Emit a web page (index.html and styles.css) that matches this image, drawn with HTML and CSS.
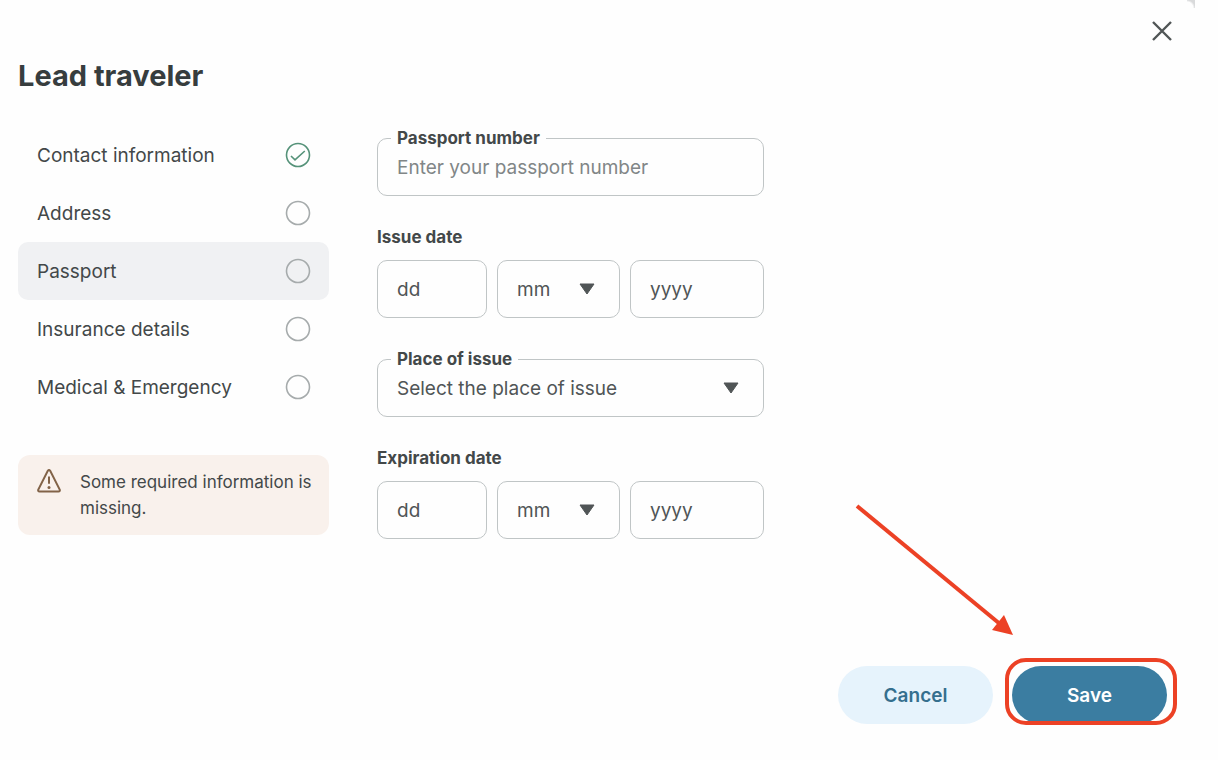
FILE: index.html
```html
<!DOCTYPE html>
<html lang="en">
<head>
    <meta charset="UTF-8">
    <meta name="viewport" content="width=device-width, initial-scale=1.0">
    <title>Lead traveler</title>
    <link rel="stylesheet" href="styles.css">
</head>
<body>
    <div class="modal">
        <div class="modal-top">
            <button type="button" class="close" aria-label="Close">
                <svg width="20" height="20" viewBox="0 0 20 20"><path d="M1 1L19 19M19 1L1 19" fill="none" stroke="currentColor" stroke-width="2.4"/></svg>
            </button>
        </div>
        <h1>Lead traveler</h1>

        <div class="content">
            <aside class="sidebar">
                <nav class="steps">
                    <a href="#contact">Contact information
                        <svg class="step-icon done" viewBox="0 0 26 26"><circle cx="13" cy="13" r="11.5"/><path d="M6 14L10 17.8L19.8 9"/></svg>
                    </a>
                    <a href="#address">Address
                        <svg class="step-icon" viewBox="0 0 26 26"><circle cx="13" cy="13" r="11.5"/></svg>
                    </a>
                    <a href="#passport" class="active">Passport
                        <svg class="step-icon" viewBox="0 0 26 26"><circle cx="13" cy="13" r="11.5"/></svg>
                    </a>
                    <a href="#insurance">Insurance details
                        <svg class="step-icon" viewBox="0 0 26 26"><circle cx="13" cy="13" r="11.5"/></svg>
                    </a>
                    <a href="#medical">Medical &amp; Emergency
                        <svg class="step-icon" viewBox="0 0 26 26"><circle cx="13" cy="13" r="11.5"/></svg>
                    </a>
                </nav>
                <div class="alert">
                    <svg class="alert-icon" viewBox="0 0 24 24"><path d="M10.8 1.9Q12 0.3 13.2 1.9L22.7 20.6Q23.3 22.4 21.5 22.4H2.5Q0.7 22.4 1.3 20.6Z"/><path d="M12 7.5V14.8"/><circle cx="12" cy="18.4" r="1.5"/></svg>
                    <p>Some required information is missing.</p>
                </div>
            </aside>

            <form id="passport-form" class="form">
                <div class="field">
                    <label for="passport-number">Passport number</label>
                    <input type="text" id="passport-number" placeholder="Enter your passport number">
                </div>

                <fieldset class="date">
                    <legend>Issue date</legend>
                    <div class="date-row">
                        <input type="text" class="date-input" placeholder="dd" aria-label="Issue day">
                        <div class="select">
                            <select aria-label="Issue month"><option>mm</option></select>
                            <svg class="caret" viewBox="0 0 16 12"><path d="M1 1H15L8 11Z"/></svg>
                        </div>
                        <input type="text" class="date-input" placeholder="yyyy" aria-label="Issue year">
                    </div>
                </fieldset>

                <div class="field">
                    <label for="place">Place of issue</label>
                    <div class="select">
                        <select id="place"><option>Select the place of issue</option></select>
                        <svg class="caret" viewBox="0 0 16 12"><path d="M1 1H15L8 11Z"/></svg>
                    </div>
                </div>

                <fieldset class="date">
                    <legend>Expiration date</legend>
                    <div class="date-row">
                        <input type="text" class="date-input" placeholder="dd" aria-label="Expiration day">
                        <div class="select">
                            <select aria-label="Expiration month"><option>mm</option></select>
                            <svg class="caret" viewBox="0 0 16 12"><path d="M1 1H15L8 11Z"/></svg>
                        </div>
                        <input type="text" class="date-input" placeholder="yyyy" aria-label="Expiration year">
                    </div>
                </fieldset>
            </form>
        </div>

        <div class="footer">
            <button type="button" class="btn btn-cancel">Cancel</button>
            <div class="save-wrap">
                <button type="submit" form="passport-form" class="btn btn-save">Save</button>
                <span class="highlight"></span>
                <svg class="arrow" viewBox="0 0 170 140"><path d="M7 6L150 124" fill="none" stroke="#ec4125" stroke-width="4"/><path d="M154 115L142 130L163 135Z" fill="#ec4125"/></svg>
            </div>
        </div>
    </div>
</body>
</html>
```

FILE: styles.css
```css
* {
    box-sizing: border-box;
}

body {
    margin: 0;
    background: #fefefe;
    color: #434849;
    font-family: Inter, "Liberation Sans", sans-serif;
    font-size: 19px;
}

.modal {
    display: flex;
    flex-direction: column;
    min-height: 100vh;
    margin-right: 23px;
    padding: 16px 28px 36px 18px;
    /* page behind the rounded corner */
    background: radial-gradient(circle at 0 100%, #fefefe 6px, #d9dadb 8px) top right / 8px 8px no-repeat;
}

.modal-top {
    display: flex;
    justify-content: flex-end;
    margin-right: -10px;
}

.close {
    display: flex;
    padding: 5px;
    border: none;
    background: none;
    color: #505556;
    cursor: pointer;
}

h1 {
    margin: 12px 0 32px;
    font-size: 29px;
    line-height: 36px;
    font-weight: 700;
    color: #373d3e;
}

.content {
    display: grid;
    grid-template-columns: minmax(260px, 311fr) minmax(340px, 387fr) 355fr;
    column-gap: 48px;
}

.steps a {
    display: flex;
    align-items: center;
    justify-content: space-between;
    height: 58px;
    padding: 0 18px 0 19px;
    border-radius: 10px;
    color: inherit;
    text-decoration: none;
}

.steps a.active {
    background: #f0f1f3;
}

.step-icon {
    width: 26px;
    height: 26px;
    fill: none;
    stroke: #a6abac;
    stroke-width: 1.6;
}

.step-icon.done {
    stroke: #559279;
}

.alert {
    display: flex;
    gap: 19px;
    margin-top: 39px;
    padding: 14px 12px 14px 19px;
    border-radius: 12px;
    background: #f9f1ec;
    font-size: 17px;
    line-height: 26px;
}

.alert p {
    margin: 0;
}

.alert-icon {
    flex: none;
    width: 24px;
    height: 24px;
    fill: none;
    stroke: #826348;
    stroke-width: 2;
}

.alert-icon circle {
    fill: #826348;
    stroke: none;
}

.form {
    display: flex;
    flex-direction: column;
    gap: 29px;
}

.field {
    position: relative;
    padding-top: 12px;
}

.field label {
    position: absolute;
    top: 0;
    left: 14px;
    z-index: 1;
    padding: 0 6px;
    background: #fefefe;
}

.field label,
legend {
    font-size: 17px;
    line-height: 24px;
    font-weight: 700;
}

input,
select {
    display: block;
    width: 100%;
    height: 58px;
    padding: 0 19px;
    border: 1px solid #c0c5c6;
    border-radius: 10px;
    background: transparent;
    color: #505556;
    font: inherit;
    appearance: none;
}

input::placeholder {
    color: #818687;
    opacity: 1;
}

.date-input::placeholder {
    color: #505556;
}

.date {
    min-width: 0;
    margin: 0;
    padding: 0;
    border: none;
}

legend {
    padding: 0;
}

.date-row {
    display: grid;
    grid-template-columns: 110fr 123fr 134fr;
    gap: 10px;
    padding-top: 11px;
}

.select {
    position: relative;
}

.caret {
    position: absolute;
    top: 23px;
    right: 25px;
    width: 16px;
    height: 12px;
    fill: #505556;
    stroke: #505556;
    stroke-linejoin: round;
    pointer-events: none;
}

.footer {
    display: flex;
    justify-content: flex-end;
    gap: 19px;
    margin-top: auto;
}

.btn {
    width: 155px;
    height: 58px;
    border: none;
    border-radius: 29px;
    font: inherit;
    font-weight: 600;
    cursor: pointer;
}

.btn-cancel {
    background: #e6f3fc;
    color: #356f8e;
}

.btn-save {
    background: #3b7da1;
    color: #fff;
}

.save-wrap {
    position: relative;
}

.highlight {
    position: absolute;
    inset: -8px -10px -1px -7px;
    border: 4px solid #ec4125;
    border-radius: 21px;
    pointer-events: none;
}

.arrow {
    position: absolute;
    top: -166px;
    left: -162px;
    width: 170px;
    height: 140px;
    pointer-events: none;
}
```
